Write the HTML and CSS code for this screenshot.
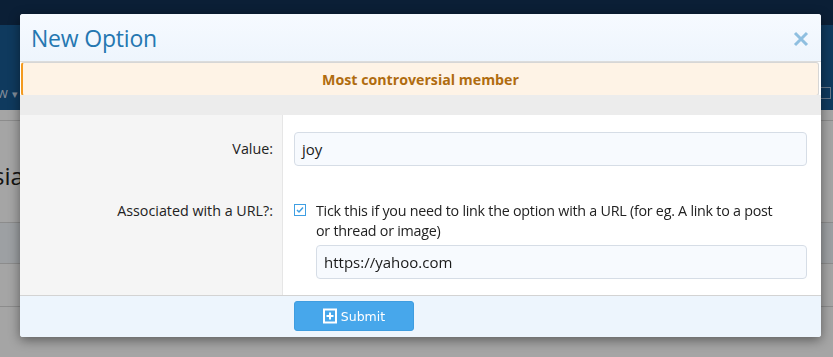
FILE: index.html
```html
<!DOCTYPE html>
<html>
<head>
<meta charset="utf-8">
<link rel="stylesheet" href="styles.css">
</head>
<body>
<div class="page">
  <div class="topbar"></div>
  <div class="navbar">
    <span class="nav-item">w <span class="caret">▾</span></span>
    <span class="nav-icon"></span>
  </div>
  <div class="content">
    <div class="row row-title"><span class="page-title">sia</span></div>
    <div class="row row-band"></div>
    <div class="row row-plain"></div>
  </div>
</div>
<div class="overlay"></div>
<div class="modal">
  <div class="modal-header">
    <h2 class="modal-title">New Option</h2>
    <span class="modal-close">
      <svg width="16" height="16" viewBox="0 0 16 16"><path d="M2 2 L14 14 M14 2 L2 14" stroke="#8fbfe0" stroke-width="3" stroke-linecap="butt"/></svg>
    </span>
  </div>
  <div class="notice">Most controversial member</div>
  <div class="spacer"></div>
  <div class="form">
    <div class="form-row">
      <div class="label">Value:</div>
      <div class="field"><div class="input">joy</div></div>
    </div>
    <div class="form-row">
      <div class="label">Associated with a URL?:</div>
      <div class="field">
        <div class="check-line">
          <span class="checkbox">
            <svg width="12" height="12" viewBox="0 0 12 12"><rect x="0.5" y="0.5" width="11" height="11" fill="#fff" stroke="#3f9fe3"/><path d="M3 6 L5 8 L9 3.5" fill="none" stroke="#3f9fe3" stroke-width="1.5"/></svg>
          </span>
          <span class="check-text">Tick this if you need to link the option with a URL (for eg. A link to a post or thread or image)</span>
        </div>
        <div class="input input-sub">https://yahoo.com</div>
      </div>
    </div>
  </div>
  <div class="modal-footer">
    <button class="submit">
      <svg width="14" height="16" viewBox="0 0 14 16"><rect x="1" y="1.5" width="12" height="13" fill="none" stroke="#fff" stroke-width="2"/><path d="M7 4.5 V11.5 M3.5 8 H10.5" stroke="#fff" stroke-width="2"/></svg>
      <span>Submit</span>
    </button>
  </div>
</div>
</body>
</html>
```
FILE: styles.css
```css
html, body {
  margin: 0;
  padding: 0;
}
body {
  width: 833px;
  height: 357px;
  overflow: hidden;
  font-family: "Open Sans", "Noto Sans", sans-serif;
  background: #fdfdfd;
}
.page {
  width: 833px;
  height: 357px;
}
.topbar {
  height: 25px;
  background: #113053;
}
.navbar {
  height: 85px;
  background: #175991;
  display: flex;
  align-items: flex-end;
  justify-content: space-between;
  padding: 0 0 8px 0;
  box-sizing: border-box;
}
.nav-item {
  color: #c8d8ea;
  font-size: 14px;
  margin-left: -3px;
}
.caret { font-size: 11px; }
.nav-icon {
  width: 10px;
  height: 10px;
  border: 1px solid #9fb9d4;
  margin-right: 2px;
  margin-bottom: 3px;
}
.content {
  background: #fdfdfd;
  padding-top: 10px;
}
.row { border-top: 1px solid #d8d8d8; }
.row-title {
  height: 101px;
  display: flex;
  align-items: center;
}
.page-title {
  font-size: 24px;
  color: #202020;
  margin-left: -7px;
  margin-top: 8px;
}
.row-band {
  height: 40px;
  background: #f2f6fa;
}
.row-plain {
  height: 42px;
  border-bottom: 1px solid #d8d8d8;
}
.overlay {
  position: fixed;
  inset: 0;
  background: rgba(0, 0, 0, 0.35);
}
.modal {
  position: absolute;
  left: 20px;
  top: 14px;
  width: 801px;
  height: 323px;
  background: #fff;
  border-radius: 3px;
  overflow: hidden;
  box-shadow: 0 3px 12px rgba(0, 0, 0, 0.45);
  display: flex;
  flex-direction: column;
}
.modal-header {
  height: 47px;
  background: linear-gradient(#f6faff, #eef5fd);
  border-bottom: 1px solid #dcdcdc;
  display: flex;
  align-items: center;
  justify-content: space-between;
  padding: 0 12px 0 11px;
  flex-shrink: 0;
}
.modal-title {
  margin: 0;
  font-weight: 400;
  font-size: 23px;
  color: #2577b1;
  letter-spacing: -0.2px;
}
.modal-close {
  display: flex;
  margin-top: 2px;
}
.notice {
  height: 34px;
  margin: 0 2px 0 1px;
  background: #fef3e6;
  border: 1px solid #d6d6d6;
  border-left: 2px solid #f39a1f;
  border-radius: 3px;
  display: flex;
  align-items: center;
  justify-content: center;
  font-weight: 700;
  font-size: 14.2px;
  color: #b06c0f;
  flex-shrink: 0;
  box-sizing: border-box;
  padding-top: 1px;
}
.spacer {
  height: 20px;
  background: #ececec;
  margin-top: -1px;
  flex-shrink: 0;
}
.form {
  flex: 1;
  background: linear-gradient(to right, #f5f5f5 262px, #e6e6e6 262px, #e6e6e6 263px, #fff 263px);
  padding-top: 17px;
}
.form-row {
  display: flex;
}
.form-row + .form-row {
  margin-top: 35px;
}
.label {
  width: 253px;
  text-align: right;
  font-size: 14.3px;
  color: #222;
  padding-right: 9px;
  line-height: 34px;
}
.form-row + .form-row .label {
  line-height: 20px;
}
.field {
  margin-left: 12px;
  width: 513px;
}
.input {
  height: 34px;
  box-sizing: border-box;
  background: #f7fafe;
  border: 1px solid #d6dde6;
  border-radius: 4px;
  font-size: 15px;
  color: #1a1a1a;
  padding: 0 7px;
  display: flex;
  align-items: center;
}
.check-line {
  display: flex;
  align-items: flex-start;
  font-size: 14.3px;
  line-height: 20px;
  color: #222;
}
.check-text {
  max-width: 462px;
  letter-spacing: -0.25px;
}
.checkbox {
  display: flex;
  margin-top: 3px;
  margin-right: 10px;
  flex-shrink: 0;
}
.input-sub {
  margin-left: 22px;
  margin-top: 4px;
}
.modal-footer {
  height: 42px;
  box-sizing: border-box;
  background: #edf5fd;
  border-top: 1px solid #d3d3d3;
  padding: 5px 0 0 274px;
  flex-shrink: 0;
}
.submit {
  width: 120px;
  height: 30px;
  background: #47a7eb;
  border: 1px solid #3f9de0;
  border-radius: 3px;
  color: #fff;
  font-family: "DejaVu Sans", sans-serif;
  font-size: 12.5px;
  display: flex;
  align-items: center;
  justify-content: center;
  gap: 4px;
  padding: 0;
}
.submit svg { display: block; }
```
